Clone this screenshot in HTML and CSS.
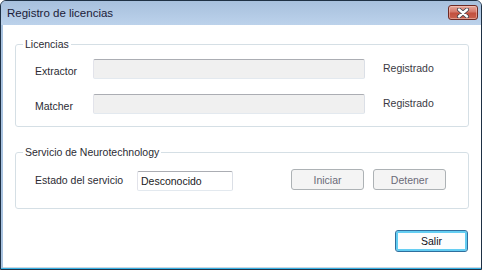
FILE: index.html
```html
<!DOCTYPE html>
<html lang="es">
<head>
<meta charset="utf-8">
<title>Registro de licencias</title>
<link rel="stylesheet" href="styles.css">
</head>
<body>
<div class="window">
  <div class="titlebar">
    <span class="title">Registro de licencias</span>
    <button class="close" aria-label="Cerrar">
      <svg width="14" height="10" viewBox="0 0 14 10">
        <path d="M3 1.5 L11 8.5 M11 1.5 L3 8.5" stroke="#3a3f4a" stroke-width="4" stroke-linecap="round" fill="none"/>
        <path d="M3 1.5 L11 8.5 M11 1.5 L3 8.5" stroke="#ffffff" stroke-width="2.4" stroke-linecap="round" fill="none"/>
      </svg>
    </button>
  </div>
  <div class="client">
    <fieldset class="group group-lic">
      <legend>Licencias</legend>
      <div class="row">
        <span class="label label-lic">Extractor</span>
        <span class="field field-lic"></span>
        <span class="status">Registrado</span>
      </div>
      <div class="row">
        <span class="label label-lic">Matcher</span>
        <span class="field field-lic"></span>
        <span class="status">Registrado</span>
      </div>
    </fieldset>
    <fieldset class="group group-srv">
      <legend>Servicio de Neurotechnology</legend>
      <div class="row">
        <span class="label label-srv">Estado del servicio</span>
        <span class="field field-srv">Desconocido</span>
        <button class="btn btn-disabled btn-first">Iniciar</button>
        <button class="btn btn-disabled">Detener</button>
      </div>
    </fieldset>
    <div class="footer">
      <button class="btn btn-default">Salir</button>
    </div>
  </div>
</div>
</body>
</html>
```

FILE: styles.css
```css
html, body {
  margin: 0;
  padding: 0;
  background: #ffffff;
}

body {
  font-family: "Liberation Sans", Arial, sans-serif;
  font-size: 10.5px;
  color: #2b2b33;
}

.window {
  width: 482px;
  height: 270px;
  box-sizing: border-box;
  border: 1px solid #1e3044;
  border-radius: 6px 6px 0 0;
  background: #a9c3e0;
  box-shadow: inset 0 -1px 0 #36b2e6;
  display: flex;
  flex-direction: column;
  overflow: hidden;
}

.titlebar {
  height: 24px;
  flex: none;
  display: flex;
  align-items: center;
  justify-content: space-between;
  background: linear-gradient(#a7c0dd, #bcd2eb);
  padding-left: 6px;
}

.title {
  font-size: 11.5px;
  color: #1b1b38;
}

.close {
  align-self: flex-start;
  margin-top: 4px;
  margin-right: 3px;
  width: 30px;
  height: 15px;
  padding: 0;
  border: 1px solid #6e2a24;
  border-radius: 3px;
  background: linear-gradient(#e7a89b 0%, #d4786a 45%, #c2503f 55%, #c9614e 100%);
  box-shadow: inset 0 0 0 1px rgba(255, 220, 210, 0.45);
  display: flex;
  align-items: center;
  justify-content: center;
}

.client {
  flex: 1;
  margin: 0 0 1px 2px;
  background: #ffffff;
  border-bottom: 1px solid #cdd6df;
  padding: 13px 0 0 12px;
}

.group {
  margin: 0;
  width: 454px;
  min-width: 0;
  box-sizing: border-box;
  border: 1px solid #d5dfe5;
  border-radius: 3px;
}

.group legend {
  padding: 0 2px;
  line-height: 12px;
  color: #2b2b33;
}

.group-lic {
  padding: 9px 0 12px 7px;
}

.group-srv {
  margin-top: 19px;
  padding: 11px 0 17px 7px;
}

.row {
  display: flex;
  align-items: flex-start;
  line-height: 12px;
}

.row + .row {
  margin-top: 15px;
}

.label {
  box-sizing: border-box;
  padding-left: 12px;
}

.label-lic {
  width: 70px;
  padding-top: 6px;
}

.label-srv {
  width: 114px;
  padding-top: 5px;
}

.field {
  box-sizing: border-box;
  height: 20px;
  border: 1px solid;
  border-color: #abadb3 #dbdfe6 #e3e9ef #e2e3ea;
  border-radius: 2px;
}

.field-lic {
  width: 272px;
  background: #f0f0f0;
}

.field-srv {
  width: 96px;
  margin-top: 2px;
  background: #ffffff;
  padding-left: 3px;
  line-height: 18px;
  color: #1a1a22;
}

.status {
  margin-left: 18px;
  padding-top: 3px;
  color: #3a3a44;
}

.btn {
  font-family: "Liberation Sans", Arial, sans-serif;
  font-size: 10.5px;
  width: 73px;
  padding: 0;
  box-sizing: border-box;
  border-radius: 3px;
}

.btn-disabled {
  height: 21px;
  border: 1px solid #adb2b5;
  background: #f4f4f4;
  color: #6a6a78;
  margin-left: 9px;
}

.btn-first {
  margin-left: 58px;
}

.footer {
  width: 454px;
  box-sizing: border-box;
  padding-right: 1px;
  margin-top: 21px;
  display: flex;
  justify-content: flex-end;
}

.btn-default {
  height: 22px;
  border: 1px solid #2f6f9e;
  background: #fbfdfe;
  box-shadow: inset 0 0 0 2px #62cdf2;
  color: #101018;
}
```
